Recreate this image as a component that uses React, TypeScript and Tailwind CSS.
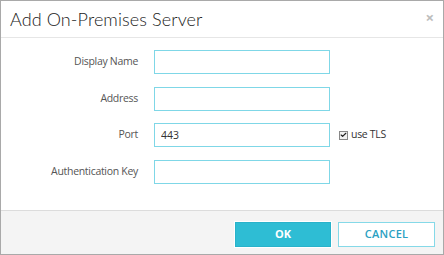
import { Check } from 'lucide-react';

const fields = [
  { label: 'Display Name', value: '', mt: '' },
  { label: 'Address', value: '', mt: 'mt-[13px]' },
  { label: 'Port', value: '443', mt: 'mt-[12px]', tls: true },
  { label: 'Authentication Key', value: '', mt: 'mt-[13px]' }
];

export default function App() {
  return (
    <div className="h-[255px] w-[444px] bg-white" style={{ fontFamily: '"Open Sans", "Noto Sans", sans-serif' }}>
      <div className="flex h-full w-full flex-col border border-[#a9a9a9]">
        <div className="flex h-[37px] shrink-0 items-center justify-between border-b border-[#e6e6e6] pl-[9px] pr-[9px]">
          <h1 className="text-[18px] font-light leading-none tracking-[0.1px] text-[#222]" style={{ fontFamily: 'Lato, "Open Sans", sans-serif' }}>Add On-Premises Server</h1>
          <span className="-mt-[4px] text-[15px] font-bold leading-none text-[#bdbdbd]">×</span>
        </div>
        <div className="flex flex-1 flex-col pt-[12px]">
          {fields.map((f) => (
            <div key={f.label} className={`flex h-[24px] items-center ${f.mt}`}>
              <label className="w-[137px] text-right text-[10.5px] tracking-[-0.3px] text-[#555]">{f.label}</label>
              <input
                className="ml-[16px] h-[24px] w-[176px] border border-[#7fd7e7] bg-white px-[6px] text-[10.5px] text-[#333] outline-none"
                defaultValue={f.value}
              />
              {f.tls && (
                <div className="ml-[9px] flex items-center gap-[3px]">
                  <span className="flex h-[9px] w-[9px] items-center justify-center border border-[#888] bg-[#f2f2f2]">
                    <Check size={8} strokeWidth={4} className="text-[#222]" />
                  </span>
                  <span className="text-[10.5px] tracking-[-0.3px] text-[#333]">use TLS</span>
                </div>
              )}
            </div>
          ))}
        </div>
        <div className="flex h-[44px] shrink-0 items-start justify-end gap-[7px] border-t border-[#dcdcdc] bg-[#f4f4f4] pr-[8px] pt-[11px]">
          <button className="h-[25px] w-[96px] border border-[#29b2ca] bg-[#2ebdd4] text-[11px] font-bold text-white outline outline-1 outline-white">OK</button>
          <button className="h-[25px] w-[97px] border border-[#85d9e8] bg-white text-[11px] font-semibold tracking-[0.3px] text-[#2a9fc2]">CANCEL</button>
        </div>
      </div>
    </div>
  );
}
